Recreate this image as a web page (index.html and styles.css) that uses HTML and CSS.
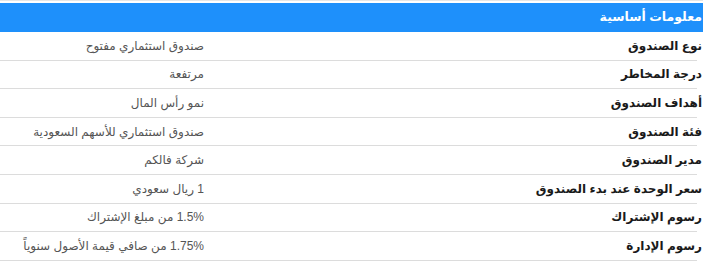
FILE: index.html
```html
<!DOCTYPE html>
<html lang="ar" dir="rtl">
<head>
<meta charset="utf-8">
<link rel="stylesheet" href="styles.css">
</head>
<body>
<div class="panel">
  <div class="head">معلومات أساسية</div>
  <div class="rows">
    <div class="row"><div class="label">نوع الصندوق</div><div class="value">صندوق استثماري مفتوح</div></div>
    <div class="row"><div class="label">درجة المخاطر</div><div class="value">مرتفعة</div></div>
    <div class="row"><div class="label">أهداف الصندوق</div><div class="value">نمو رأس المال</div></div>
    <div class="row"><div class="label">فئة الصندوق</div><div class="value">صندوق استثماري للأسهم السعودية</div></div>
    <div class="row"><div class="label">مدير الصندوق</div><div class="value">شركة فالكم</div></div>
    <div class="row"><div class="label">سعر الوحدة عند بدء الصندوق</div><div class="value">1 ريال سعودي</div></div>
    <div class="row"><div class="label">رسوم الإشتراك</div><div class="value">1.5% من مبلغ الإشتراك</div></div>
    <div class="row"><div class="label">رسوم الإدارة</div><div class="value">1.75% من صافي قيمة الأصول سنوياً</div></div>
  </div>
</div>
</body>
</html>
```
FILE: styles.css
```css
html, body {
  margin: 0;
  padding: 0;
  background: #ffffff;
}
body {
  font-family: "Liberation Sans", "DejaVu Sans", sans-serif;
  color: #222;
}
.panel {
  border-top: 1px solid #e6e6e6;
  padding-top: 2px;
  width: 703px;
}
.head {
  background: #1e90fb;
  color: #ffffff;
  font-weight: bold;
  font-size: 12.5px;
  height: 29px;
  line-height: 28px;
  padding-right: 1px;
}
.rows {
  margin-right: 6px;
}
.row {
  display: flex;
  height: 28.6px;
  align-items: center;
  border-bottom: 1px solid #dcdcdc;
  box-sizing: border-box;
}
.label {
  width: 498px;
  margin-right: -5px;
  font-weight: bold;
  font-size: 12px;
  color: #1a1a1a;
}
.value {
  flex: 1;
  font-size: 12px;
  color: #555;
}
```
